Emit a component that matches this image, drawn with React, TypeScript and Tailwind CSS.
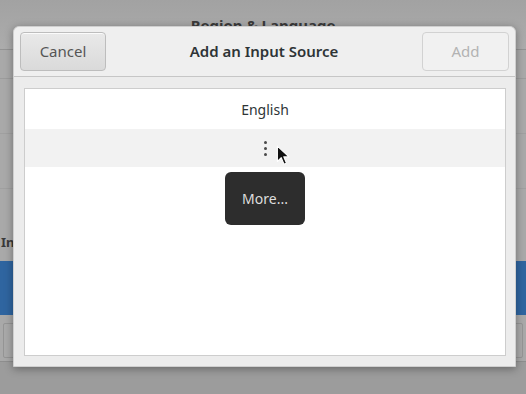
import React from 'react'

const font = { fontFamily: '"Noto Sans", "Open Sans", sans-serif' }

function Cursor() {
  return (
    <svg width="16" height="22" viewBox="0 0 14 20" className="absolute left-[251px] top-[56px]">
      <path d="M1 1 L1 15 L4.5 11.5 L7 17.5 L9.2 16.5 L6.8 10.8 L11.5 10.8 Z" fill="#111" stroke="#fff" strokeWidth="1" strokeLinejoin="round" />
    </svg>
  )
}

function ParentWindow() {
  return (
    <div className="flex flex-col h-[362px] bg-[#a9a9a9] border-b border-[#8e8e8e]">
      <div className="h-[50px] shrink-0 bg-gradient-to-b from-[#a2a2a2] to-[#acacac] border-b border-[#939393] flex justify-center pt-[14px]">
        <span className="text-[15px] font-bold text-[#3a3a3a]">Region &amp; Language</span>
      </div>
      <div className="h-[29px] shrink-0 border-b border-[#9c9c9c]" />
      <div className="h-[55px] shrink-0 border-b border-[#a0a0a0]" />
      <div className="h-[55px] shrink-0 border-b border-[#a0a0a0]" />
      <div className="h-[72px] shrink-0 flex items-end pb-[9px]">
        <span className="text-[13px] font-bold text-[#3a3a3a] pl-[1px]">In</span>
      </div>
      <div className="h-[54px] shrink-0 bg-[#2f65a0]" />
      <div className="flex-1 flex justify-between px-[3px] pt-[8px] pb-[3px]">
        <div className="w-[20px] border border-[#959595] rounded-[2px]" />
        <div className="w-[20px] border border-[#959595] rounded-[2px]" />
      </div>
    </div>
  )
}

export default function App() {
  return (
    <div className="relative w-[526px] h-[394px] overflow-hidden bg-[#9c9c9c]" style={font}>
      <ParentWindow />

      <div className="absolute left-[13px] top-[26px] w-[503px] h-[341px] flex flex-col bg-[#ececec] rounded-t-[6px] shadow-[0_2px_8px_rgba(0,0,0,0.35)] border border-[#cfcfcf]">
        <div className="h-[50px] shrink-0 flex items-center justify-between px-[6px] bg-[#efefef] border-b border-[#c6c6c6] rounded-t-[6px]">
          <button className="w-[86px] h-[39px] rounded-[4px] border border-[#bdbdbd] bg-gradient-to-b from-[#e9e9e9] to-[#dadada] text-[15px] text-[#555] shadow-[0_1px_0_rgba(255,255,255,0.8)_inset]">
            Cancel
          </button>
          <span className="text-[15px] font-semibold text-[#2e3436]">Add an Input Source</span>
          <button className="w-[87px] h-[39px] rounded-[4px] border border-[#d2d2d2] bg-[#f1f1f1] text-[15px] text-[#b3b3b3]">
            Add
          </button>
        </div>

        <div className="flex-1 pl-[10px] pr-[9px] pt-[11px] pb-[10px] flex">
          <div className="relative flex-1 bg-white border border-[#cdcdcd] flex flex-col">
            <div className="h-[40px] shrink-0 flex items-center justify-center text-[14px] text-[#2e3436]">
              English
            </div>
            <div className="h-[38px] shrink-0 bg-[#f2f2f2] flex flex-col items-center justify-center gap-[3px]">
              <div className="w-[3px] h-[3px] rounded-full bg-[#4a4a4a]" />
              <div className="w-[3px] h-[3px] rounded-full bg-[#4a4a4a]" />
              <div className="w-[3px] h-[3px] rounded-full bg-[#4a4a4a]" />
            </div>
            <Cursor />
            <div className="absolute left-[200px] top-[83px] w-[80px] h-[53px] rounded-[6px] bg-[#2d2d2d] flex items-center justify-center text-[14px] text-[#dedede]">
              More...
            </div>
          </div>
        </div>
      </div>
    </div>
  )
}
